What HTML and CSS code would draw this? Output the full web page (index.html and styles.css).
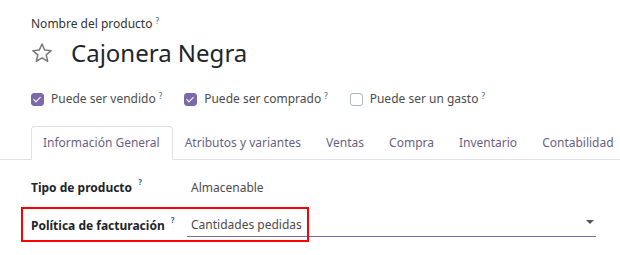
FILE: index.html
```html
<!DOCTYPE html>
<html lang="es">
<head>
    <meta charset="UTF-8">
    <title>Cajonera Negra</title>
    <link rel="stylesheet" href="styles.css">
</head>
<body>
    <div class="sheet">
        <div class="title-block">
            <label class="field-label">Nombre del producto <sup>?</sup></label>
            <h1 class="product-name">
                <svg class="star" width="22" height="22" viewBox="0 0 24 24">
                    <path d="M12 2.2l2.9 6.6 7.1.6-5.4 4.7 1.6 7-6.2-3.7-6.2 3.7 1.6-7L2 9.4l7.1-.6z" fill="none" stroke="#777" stroke-width="1.6" stroke-linejoin="round"/>
                </svg>
                <span>Cajonera Negra</span>
            </h1>
        </div>

        <div class="options">
            <label class="check"><span class="box checked"></span><span>Puede ser vendido</span><sup>?</sup></label>
            <label class="check"><span class="box checked"></span><span>Puede ser comprado</span><sup>?</sup></label>
            <label class="check"><span class="box"></span><span>Puede ser un gasto</span><sup>?</sup></label>
        </div>
    </div>

    <ul class="tabs">
        <li class="active">Información General</li>
        <li>Atributos y variantes</li>
        <li>Ventas</li>
        <li>Compra</li>
        <li>Inventario</li>
        <li>Contabilidad</li>
    </ul>

    <div class="group">
        <div class="row">
            <div class="row-label">Tipo de producto <sup>?</sup></div>
            <div class="row-value">Almacenable</div>
        </div>
        <div class="row">
            <div class="row-label">Política de facturación <sup>?</sup></div>
            <div class="row-value select">
                <span>Cantidades pedidas</span>
                <span class="caret"></span>
            </div>
            <div class="mark"></div>
        </div>
    </div>
</body>
</html>
```

FILE: styles.css
```css
body {
    margin: 0;
    font-family: 'Noto Sans', 'Open Sans', sans-serif;
    font-size: 12px;
    color: #4c4c4c;
    background: #fff;
    overflow: hidden;
}
sup {
    font-size: 8px;
    color: #3e5b8c;
    vertical-align: top;
    position: relative;
    top: -3px;
    margin-left: 3px;
}
.sheet {
    padding: 15px 0 0 31px;
}
.field-label {
    display: block;
    color: #333;
    line-height: 18px;
}
.field-label sup {
    margin-left: 0;
}
.product-name {
    display: flex;
    align-items: center;
    margin: 2px 0 0;
    font-size: 24px;
    font-weight: normal;
    color: #212529;
    line-height: 36px;
}
.star {
    margin-right: 18px;
}
.options {
    display: flex;
    gap: 22px;
    margin-top: 19px;
    line-height: 18px;
}
.check {
    display: flex;
    align-items: center;
}
.box {
    width: 11px;
    height: 11px;
    border: 1px solid #adb5bd;
    border-radius: 3px;
    margin-right: 7px;
    display: inline-block;
    position: relative;
}
.box.checked {
    background: #7c6aa8;
    border-color: #7c6aa8;
}
.box.checked::after {
    content: "";
    position: absolute;
    left: 3px;
    top: 1px;
    width: 3px;
    height: 6px;
    border: solid #fff;
    border-width: 0 1.5px 1.5px 0;
    transform: rotate(45deg);
}
.tabs {
    list-style: none;
    display: flex;
    margin: 18px 0 0;
    padding: 0 0 0 31px;
    border-bottom: 1px solid #dee2e6;
}
.tabs li {
    padding: 8px 12px 8px 11px;
    margin-bottom: -1px;
    border: 1px solid transparent;
    border-radius: 4px 4px 0 0;
    color: #6b5f88;
    line-height: 16px;
    white-space: nowrap;
}
.tabs li.active {
    border-color: #dee2e6 #dee2e6 #fff;
    background: #fff;
}
.group {
    padding: 8px 24px 0 31px;
}
.row {
    display: flex;
    align-items: center;
    height: 38px;
    position: relative;
}
.row-label {
    width: 160px;
    flex: none;
    font-weight: bold;
    color: #212529;
}
.row-value {
    flex: 1;
}
.row-value.select {
    display: flex;
    justify-content: space-between;
    align-items: center;
    height: 22px;
    margin-left: -4px;
    padding-left: 4px;
    border-bottom: 1px solid #7c6aa8;
}
.caret {
    width: 0;
    height: 0;
    border-left: 4px solid transparent;
    border-right: 4px solid transparent;
    border-top: 4px solid #555;
    margin-right: 2px;
    margin-top: -6px;
}
.mark {
    position: absolute;
    left: -10px;
    top: 1px;
    width: 288px;
    height: 35px;
    box-sizing: border-box;
    border: 2px solid #f00;
}
```
